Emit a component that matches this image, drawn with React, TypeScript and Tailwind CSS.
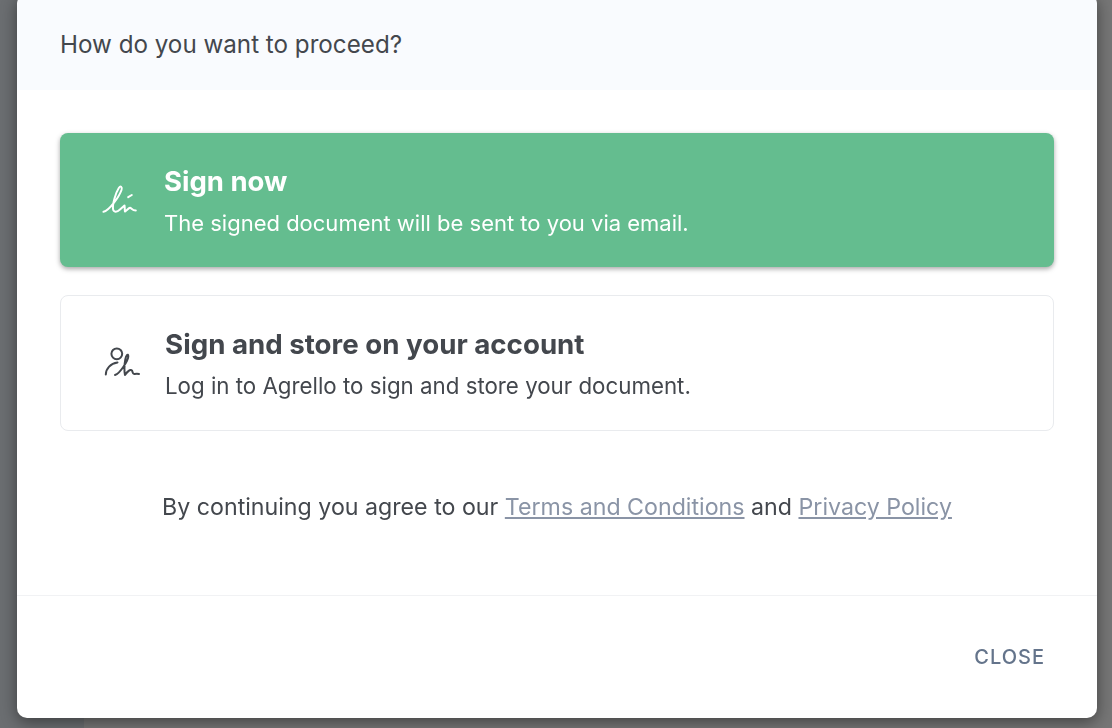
const font = "font-['Inter',sans-serif]";

function SignIcon() {
  return (
    <svg viewBox="0 0 40 40" className="w-10 h-10 shrink-0" fill="none" stroke="#ffffff" strokeWidth="2" strokeLinecap="round" strokeLinejoin="round">
      <path d="M3.5 31.8C9 31 19 17 21.5 10C22.5 6.5 20.5 5.5 18.8 8C15.5 13 12.5 24 13 29C13.4 32.5 17 32.5 20 29.5L24.5 25.5C25 28 24.5 31 25 31.5C27 30.5 28.5 28 30 27.8C31.5 27.8 32 30.5 35.8 30.5" />
      <path d="M28.2 17.2L31.8 15" />
    </svg>
  );
}

function AccountIcon() {
  return (
    <svg viewBox="0 0 45 40" className="w-[45px] h-10 shrink-0" fill="none" stroke="#43474d" strokeWidth="2" strokeLinecap="round" strokeLinejoin="round">
      <circle cx="16.8" cy="10.8" r="5.4" />
      <path d="M5.8 31.5C6 25.5 10.5 20.5 17.5 19.5" />
      <path d="M15 32C20 30.5 28.5 17 28.3 13C28 10 26 12.5 25.3 16.5C24.5 21 24.2 28 25 32C27 29 30.5 25.5 32 27.5C32.8 29 32.5 31.5 34.5 31C36 30.7 37 30.5 39 31" />
    </svg>
  );
}

export default function App() {
  return (
    <div className={`h-[728px] w-[1112px] overflow-hidden flex bg-[#767676] ${font}`}>
      <div className="w-[84px] shrink-0 bg-[#6b6e71]" />
      <div className="flex-1" />
      <div className="fixed inset-0 flex items-start justify-center">
        <div className="w-[1080px] h-[724px] mt-[-6px] ml-[2px] bg-white rounded-[10px] shadow-[0_4px_16px_rgba(0,0,0,0.45)] flex flex-col overflow-hidden">
          <div className="h-[96px] shrink-0 bg-[#f9fbfe] pt-[6px] px-[43px] flex items-center">
            <h1 className="text-[24.2px] font-normal text-[#43474d]">How do you want to proceed?</h1>
          </div>

          <div className="flex-1 px-[43px] pt-[43px]">
            <button className="w-full h-[134px] rounded-[8px] bg-[#64bd8f] shadow-[0_2px_5px_rgba(0,0,0,0.35)] flex items-center pl-[40px] text-left text-white">
              <SignIcon />
              <div className="ml-[24px]">
                <div className="text-[27.5px] leading-[36px] font-bold">Sign now</div>
                <div className="mt-[9px] text-[22px] leading-[30px]">The signed document will be sent to you via email.</div>
              </div>
            </button>

            <button className="mt-[28px] w-full h-[136px] rounded-[8px] bg-white border border-[#e9ebee] flex items-center pl-[39px] text-left text-[#43474d]">
              <AccountIcon />
              <div className="ml-[20px]">
                <div className="text-[27.7px] leading-[36px] font-bold">Sign and store on your account</div>
                <div className="mt-[9px] text-[22.3px] leading-[30px]">Log in to Agrello to sign and store your document.</div>
              </div>
            </button>

            <p className="mt-[60px] text-center text-[23.2px] leading-[32px] text-[#43474d]">
              By continuing you agree to our <a className="underline text-[#8a94a6]">Terms and Conditions</a> and <a className="underline text-[#8a94a6]">Privacy Policy</a>
            </p>
          </div>

          <div className="h-[123px] shrink-0 border-t border-[#f1f2f4] flex items-center justify-end pr-[52px]">
            <span className="text-[20px] font-medium tracking-[0.05em] text-[#64748b]">CLOSE</span>
          </div>
        </div>
      </div>
    </div>
  );
}
